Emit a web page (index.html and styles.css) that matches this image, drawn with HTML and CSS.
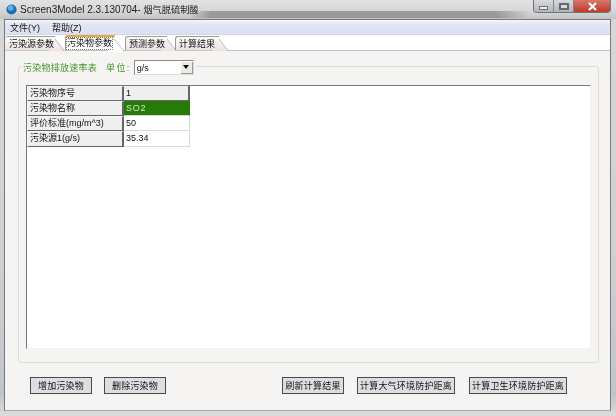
FILE: index.html
```html
<!DOCTYPE html>
<html lang="zh-CN">
<head>
    <meta charset="UTF-8">
    <title>Screen3Model</title>
    <link rel="stylesheet" href="styles.css">
</head>
<body>
    <div class="window">
        <div class="titlebar">
            <svg class="app-icon" width="11" height="11" viewBox="0 0 14 14">
                <circle cx="7" cy="7" r="6.5" fill="#1c6fb0"/>
                <circle cx="6" cy="5" r="3.5" fill="#5fb2e6"/>
            </svg>
            <span class="title-text">Screen3Model 2.3.130704- <span class="title-cjk">烟气脱硫制酸</span></span>
            <div class="caption-btns">
                <div class="cap-btn"><span class="cap-min"></span></div>
                <div class="cap-btn"><span class="cap-max"></span></div>
                <div class="cap-btn cap-close">
                    <svg width="11" height="9" viewBox="0 0 11 9">
                        <path d="M2 1 L9 8 M9 1 L2 8" stroke="#fff" stroke-width="2.2"/>
                    </svg>
                </div>
            </div>
        </div>

        <div class="client">
            <div class="menubar">
                <span class="menu-item">文件(Y)</span>
                <span class="menu-item">帮助(Z)</span>
            </div>

            <div class="tabstrip">
                <div class="tab tab-first">污染源参数</div>
                <div class="tab tab-active"><span class="tab-focus">污染物参数</span></div>
                <div class="tab tab-third">预测参数</div>
                <div class="tab tab-last">计算结果</div>
            </div>

            <div class="tab-panel">
                <div class="group-box">
                    <div class="group-legend">
                        <span class="legend-title">污染物排放速率表</span>
                        <span class="legend-unit">单位:</span>
                        <div class="combo">
                            <span class="combo-value">g/s</span>
                            <span class="combo-btn"><span class="combo-arrow"></span></span>
                        </div>
                    </div>
                    <div class="grid-area">
                        <div class="data-grid">
                            <div class="row-head">污染物序号</div>
                            <div class="cell cell-first">1</div>
                            <div class="row-head">污染物名称</div>
                            <div class="cell cell-selected">SO2</div>
                            <div class="row-head">评价标准(mg/m^3)</div>
                            <div class="cell">50</div>
                            <div class="row-head">污染源1(g/s)</div>
                            <div class="cell">35.34</div>
                        </div>
                    </div>
                </div>

                <div class="button-row">
                    <button class="btn btn-add">增加污染物</button>
                    <button class="btn btn-del">删除污染物</button>
                    <button class="btn btn-refresh">刷新计算结果</button>
                    <button class="btn btn-air">计算大气环境防护距离</button>
                    <button class="btn btn-health">计算卫生环境防护距离</button>
                </div>
            </div>
        </div>
    </div>
</body>
</html>
```

FILE: styles.css
```css
/* Basic styling */
html, body {
    margin: 0;
    padding: 0;
}

body {
    width: 616px;
    height: 416px;
    overflow: hidden;
    font-family: "Liberation Sans", "Noto Sans CJK SC", sans-serif;
    font-size: 9px;
    color: #111;
}

.window {
    width: 616px;
    height: 416px;
    display: flex;
    flex-direction: column;
    box-sizing: border-box;
    padding: 0 5px 5px 4px;
    background: linear-gradient(to bottom, #d8d8d8, #cfd0d2 60%, #c2c5c8 95%, #dcdcdc);
    filter: blur(0.35px);
}

/* Title bar */
.titlebar {
    height: 19px;
    flex: none;
    display: flex;
    align-items: center;
    margin: 0 -5px 0 -4px;
    padding-left: 6px;
    background:
        linear-gradient(to right, transparent, rgba(100, 100, 100, 0.5) 6%, rgba(100, 100, 100, 0.5) 90%, transparent) 190px 11px / 340px 7px no-repeat,
        linear-gradient(to bottom, #e2e2e2 0, #d6d6d6 60%, #c4c4c4 100%);
}

.app-icon {
    margin-right: 3px;
    margin-top: -1px;
}

.title-text {
    font-size: 10px;
    color: #222;
    margin-top: -1px;
}

.title-cjk {
    font-size: 9.2px;
}

.caption-btns {
    margin-left: auto;
    margin-right: 5px;
    align-self: flex-start;
    display: flex;
    height: 12px;
    border: 1px solid #70757c;
    border-top: 0;
    border-radius: 0 0 4px 4px;
    overflow: hidden;
}

.cap-btn {
    width: 20px;
    box-sizing: border-box;
    display: flex;
    align-items: center;
    justify-content: center;
    background: linear-gradient(to bottom, #d8dadd, #b2b5b9);
    border-right: 1px solid #80858b;
}

.cap-close {
    width: 36px;
    border-right: 0;
    background: linear-gradient(to bottom, #d9776a, #bd3a2a);
}

.cap-min {
    width: 7px;
    height: 2px;
    margin-top: 3px;
    background: #eceef0;
    border: 1px solid #6f7377;
}

.cap-max {
    width: 6px;
    height: 3px;
    background: #d8dadd;
    border: 2px solid #66696e;
}

/* Client area */
.client {
    flex: 1;
    display: flex;
    flex-direction: column;
    min-height: 0;
    border: 1px solid #75797c;
    border-bottom-color: #a8aaab;
    background: #fff;
}

.menubar {
    height: 14px;
    flex: none;
    display: flex;
    align-items: center;
    gap: 12px;
    padding-left: 5px;
    background: linear-gradient(to bottom, #f4f6fb, #dfe4f4 35%, #dde2f3);
    border-bottom: 1px solid #d2d6e2;
}

.tabstrip {
    height: 15px;
    flex: none;
    display: flex;
    align-items: flex-end;
    position: relative;
    z-index: 1;
}

.tab {
    position: relative;
    box-sizing: border-box;
    height: 14px;
    line-height: 14px;
    padding-left: 3px;
    white-space: nowrap;
    background: linear-gradient(to bottom, #fcfcfc, #ebe3e0);
    border: 1px solid #9a9a9a;
    border-right: 0;
    border-bottom: 0;
    border-radius: 3px 0 0 0;
}

/* slanted right edge */
.tab::after {
    content: "";
    position: absolute;
    top: -1px;
    right: -10px;
    width: 15px;
    height: 14px;
    background: linear-gradient(to bottom, #fcfcfc, #ebe3e0);
    border: 1px solid #9a9a9a;
    border-left: 0;
    border-bottom: 0;
    border-radius: 0 3px 0 0;
    transform: skewX(38deg);
    transform-origin: bottom left;
    z-index: -1;
}

.tab-first {
    width: 50px;
    margin-right: 10px;
    padding-left: 4px;
    border-left: 0;
}

.tab-active {
    width: 50px;
    height: 15px;
    margin-right: 10px;
    padding-left: 1px;
    background: #fff;
    border-top: 2px solid #e8a838;
    line-height: 12px;
    z-index: 2;
}

.tab-active::after {
    top: -2px;
    height: 15px;
    background: #fff;
    border-top: 2px solid #e8a838;
}

.tab-focus {
    display: inline-block;
    line-height: 11px;
    outline: 1px dotted #777;
}

.tab-third {
    width: 42px;
    margin-right: 8px;
}

.tab-last {
    width: 44px;
}

.tab-panel {
    flex: 1;
    min-height: 0;
    display: flex;
    flex-direction: column;
    background: #f6f4f3;
    border-top: 1px solid #c4c6c4;
    padding: 15px 11px 0 13px;
}

/* Group box */
.group-box {
    height: 297px;
    flex: none;
    position: relative;
    box-sizing: border-box;
    border: 1px solid #dcdcd8;
    border-radius: 3px;
    padding: 18px 7px 13px 7px;
    display: flex;
}

.group-legend {
    position: absolute;
    top: -7px;
    left: 3px;
    display: flex;
    align-items: center;
    padding: 0 2px 0 1px;
    background: #f6f4f3;
}

.legend-title {
    color: #45962c;
    letter-spacing: 0.25px;
    margin-right: 9px;
}

.legend-unit {
    color: #45962c;
    letter-spacing: 1.4px;
    margin-right: 3px;
}

.combo {
    width: 60px;
    height: 15px;
    box-sizing: border-box;
    display: flex;
    align-items: center;
    background: #fff;
    border: 1px solid #8c8c8c;
    border-right-color: #dcdcdc;
    border-bottom-color: #dcdcdc;
}

.combo-value {
    flex: 1;
    padding-left: 2px;
}

.combo-btn {
    width: 12px;
    height: 12px;
    display: flex;
    align-items: center;
    justify-content: center;
    background: #ecebe8;
    border-right: 1px solid #999;
    border-bottom: 1px solid #999;
    box-sizing: border-box;
}

.combo-arrow {
    width: 0;
    height: 0;
    border-left: 3px solid transparent;
    border-right: 3px solid transparent;
    border-top: 4px solid #000;
}

/* Grid */
.grid-area {
    flex: 1;
    background: #fff;
    border: 1px solid #777;
    border-right-color: #f0f0ee;
    border-bottom-color: #f0f0ee;
}

.data-grid {
    display: grid;
    grid-template-columns: 97px 66px;
    grid-template-rows: 15px 15px 15px 16px;
    width: 163px;
}

.row-head {
    box-sizing: border-box;
    padding-left: 2px;
    line-height: 13px;
    white-space: nowrap;
    overflow: hidden;
    background: #efefef;
    border: 1px solid #f6f6f6;
    border-right: 2px solid #666;
    border-bottom: 1px solid #666;
}

.cell {
    box-sizing: border-box;
    padding-left: 2px;
    line-height: 14px;
    background: #fff;
    border-right: 1px solid #d8d8d8;
    border-bottom: 1px solid #d8d8d8;
}

.cell-first {
    background: #efefef;
    border-right: 2px solid #666;
    border-bottom: 1px solid #666;
}

.cell-selected {
    background: #267a08;
    color: #d6e8cc;
    letter-spacing: 0.8px;
    border-right: 1px solid #267a08;
}

/* Buttons */
.button-row {
    display: flex;
    margin-top: 14px;
    padding-left: 12px;
}

.btn {
    height: 17px;
    box-sizing: border-box;
    padding: 0;
    appearance: none;
    font-family: inherit;
    font-size: 9px;
    letter-spacing: 0.2px;
    color: #111;
    background: #dcdee2;
    border: 1px solid #4a4a4a;
    border-radius: 0;
    white-space: nowrap;
}

.btn-add { width: 62px; margin-right: 12px; }
.btn-del { width: 62px; margin-right: 116px; }
.btn-refresh { width: 62px; margin-right: 13px; }
.btn-air { width: 98px; margin-right: 14px; }
.btn-health { width: 98px; }
```
